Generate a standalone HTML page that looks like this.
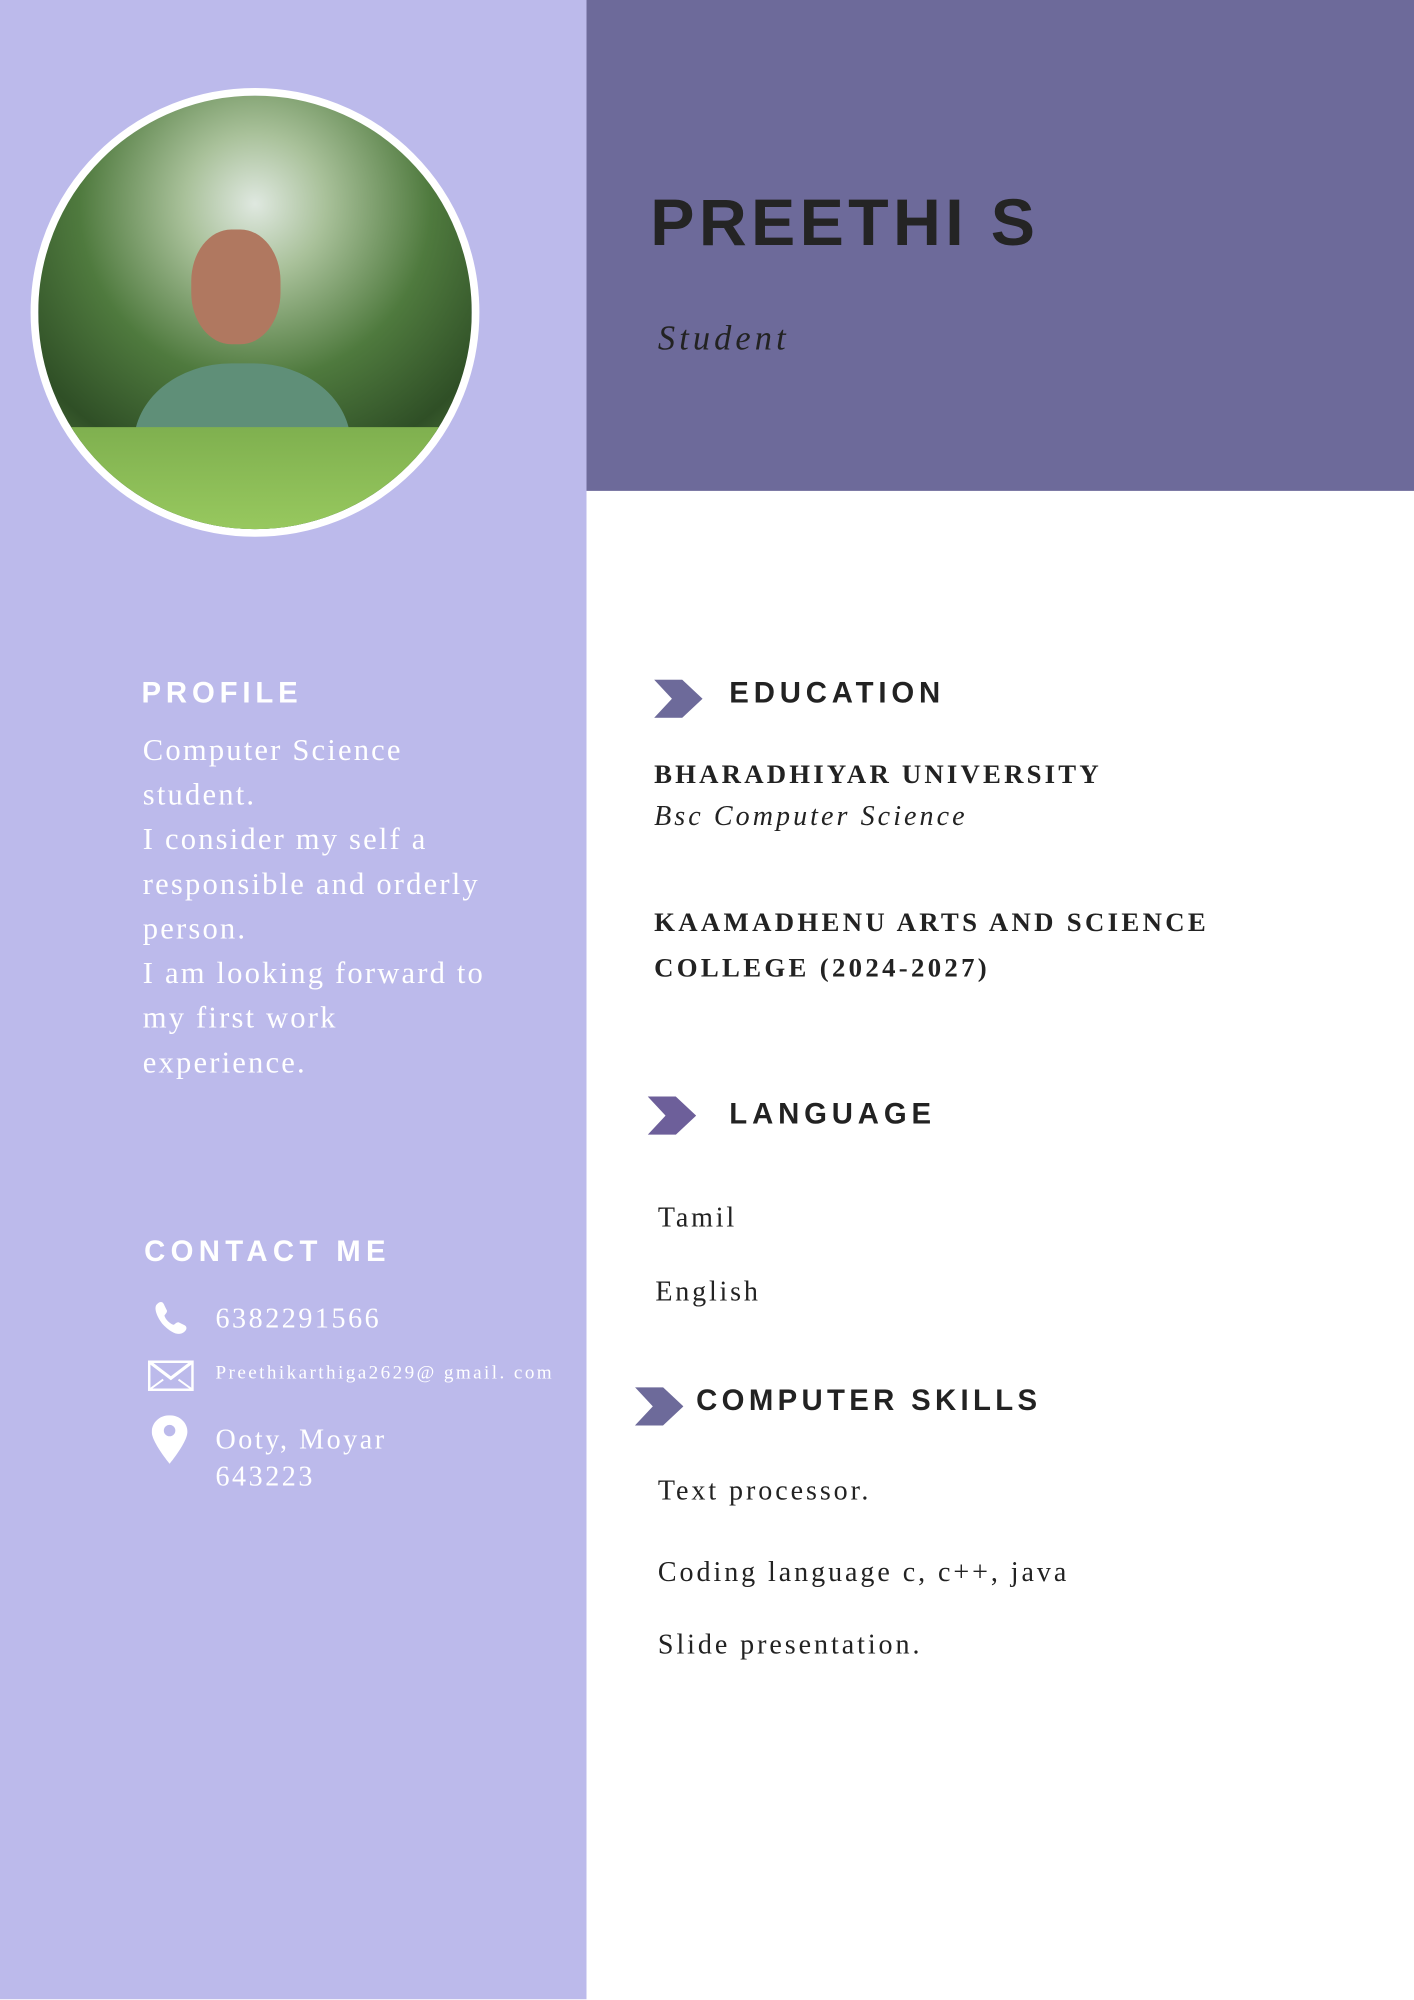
<!DOCTYPE html>
<html><head><meta charset="utf-8"><style>
html,body{margin:0;padding:0;width:1414px;height:2000px;overflow:hidden;background:#fff}
#w{position:absolute;left:0;top:0;width:1109px;height:1568px;transform:scale(1.27502);transform-origin:0 0}
.a{position:absolute;white-space:nowrap}
.s{font-family:"Liberation Serif",serif}
.h{font-family:"Liberation Sans",sans-serif;font-weight:bold;letter-spacing:3.8px}
.l{color:#fff}
.d{color:#222}
</style></head><body><div id="w">
<div class="a" style="left:0;top:0;width:460px;height:1568px;background:#bcbaeb"></div>
<div class="a" style="left:460px;top:0;width:649px;height:385px;background:#6d6a9a"></div>
<div class="a" style="left:24px;top:69px;width:340px;height:340px;border-radius:50%;border:6px solid #fff;overflow:hidden;background:radial-gradient(circle at 50% 25%,#dfe8e0 0,#a9c19a 18%,#4f7a3e 45%,#2f4f26 70%,#6f9a4f 100%)">
<div style="position:absolute;left:120px;top:105px;width:70px;height:90px;border-radius:45%;background:#b07860"></div>
<div style="position:absolute;left:75px;top:210px;width:170px;height:140px;border-radius:45% 45% 0 0;background:#5f8f78"></div>
<div style="position:absolute;left:0;top:260px;width:340px;height:90px;background:linear-gradient(#7fb04f,#9acb60)"></div>
</div>
<div class="a h d" style="left:510px;top:145px;font-size:52px;letter-spacing:3.4px;color:#242424">PREETHI S</div>
<div class="a s" style="left:516px;top:250px;font-size:27px;font-style:italic;letter-spacing:3.2px;color:#222">Student</div>

<div class="a h l" style="left:111px;top:530px;font-size:23px">PROFILE</div>
<div class="a s l" style="left:112px;top:572px;font-size:24px;line-height:35px;white-space:normal;width:340px;letter-spacing:1.7px">Computer Science<br>student.<br>I consider my self a<br>responsible and orderly<br>person.<br>I am looking forward to<br>my first work<br>experience.</div>

<div class="a h l" style="left:113px;top:968px;font-size:23px;letter-spacing:4.2px">CONTACT ME</div>
<svg class="a" style="left:119px;top:1019px" width="30" height="30" viewBox="0 0 30 30"><path d="M4 4c3-3 5-2 6 1l2 4c0 2-2 3-2 4 1 3 4 6 7 7 1 0 2-2 4-2l4 2c3 1 3 4 0 6-4 3-10 0-15-5S1 7 4 4z" fill="#fff"/></svg>
<div class="a s l" style="left:169px;top:1021px;font-size:22px;letter-spacing:2px">6382291566</div>
<svg class="a" style="left:116px;top:1067px" width="36" height="24" viewBox="0 0 36 24"><rect x="1" y="1" width="34" height="22" fill="none" stroke="#fff" stroke-width="2"/><path d="M1 1l17 13 17-13" fill="none" stroke="#fff" stroke-width="2.5"/><path d="M1 23l11-8M35 23l-11-8" stroke="#fff" stroke-width="1.5"/></svg>
<div class="a s l" style="left:169px;top:1069px;font-size:15px;letter-spacing:1.9px">Preethikarthiga2629@ gmail. com</div>
<svg class="a" style="left:119px;top:1110px" width="28" height="38" viewBox="0 0 28 38"><path d="M14 0C6 0 0 6 0 13c0 8 14 25 14 25s14-17 14-25C28 6 22 0 14 0z" fill="#fff"/><circle cx="14" cy="12" r="4.5" fill="#bcbaeb"/></svg>
<div class="a s l" style="left:169px;top:1114px;font-size:22px;line-height:29px;letter-spacing:2px">Ooty, Moyar<br>643223</div>

<svg class="a" style="left:513px;top:533px" width="38" height="30" viewBox="0 0 38 30"><path d="M0 0h22l16 15-16 15H0l14-15z" fill="#6d6a9a"/></svg>
<div class="a h d" style="left:572px;top:530px;font-size:23px">EDUCATION</div>
<div class="a s d" style="left:513px;top:595px;font-size:21px;font-weight:bold;letter-spacing:2.5px">BHARADHIYAR UNIVERSITY</div>
<div class="a s d" style="left:513px;top:627px;font-size:22px;font-style:italic;letter-spacing:2.4px">Bsc Computer Science</div>
<div class="a s d" style="left:513px;top:705px;font-size:21px;font-weight:bold;letter-spacing:2.6px;line-height:36px">KAAMADHENU ARTS AND SCIENCE<br>COLLEGE (2024-2027)</div>

<svg class="a" style="left:508px;top:860px" width="38" height="30" viewBox="0 0 38 30"><path d="M0 0h22l16 15-16 15H0l14-15z" fill="#6d5f9a"/></svg>
<div class="a h d" style="left:572px;top:860px;font-size:23px">LANGUAGE</div>
<div class="a s d" style="left:516px;top:942px;font-size:22px;letter-spacing:2.2px">Tamil</div>
<div class="a s d" style="left:514px;top:1000px;font-size:22px;letter-spacing:2.2px">English</div>

<svg class="a" style="left:498px;top:1088px" width="38" height="30" viewBox="0 0 38 30"><path d="M0 0h22l16 15-16 15H0l14-15z" fill="#6d6a9a"/></svg>
<div class="a h d" style="left:546px;top:1085px;font-size:23px;letter-spacing:3.4px">COMPUTER SKILLS</div>
<div class="a s d" style="left:516px;top:1156px;font-size:22px;letter-spacing:2.3px">Text processor.</div>
<div class="a s d" style="left:516px;top:1220px;font-size:22px;letter-spacing:2.3px">Coding language c, c++, java</div>
<div class="a s d" style="left:516px;top:1277px;font-size:22px;letter-spacing:2.3px">Slide presentation.</div>
</div></body></html>
